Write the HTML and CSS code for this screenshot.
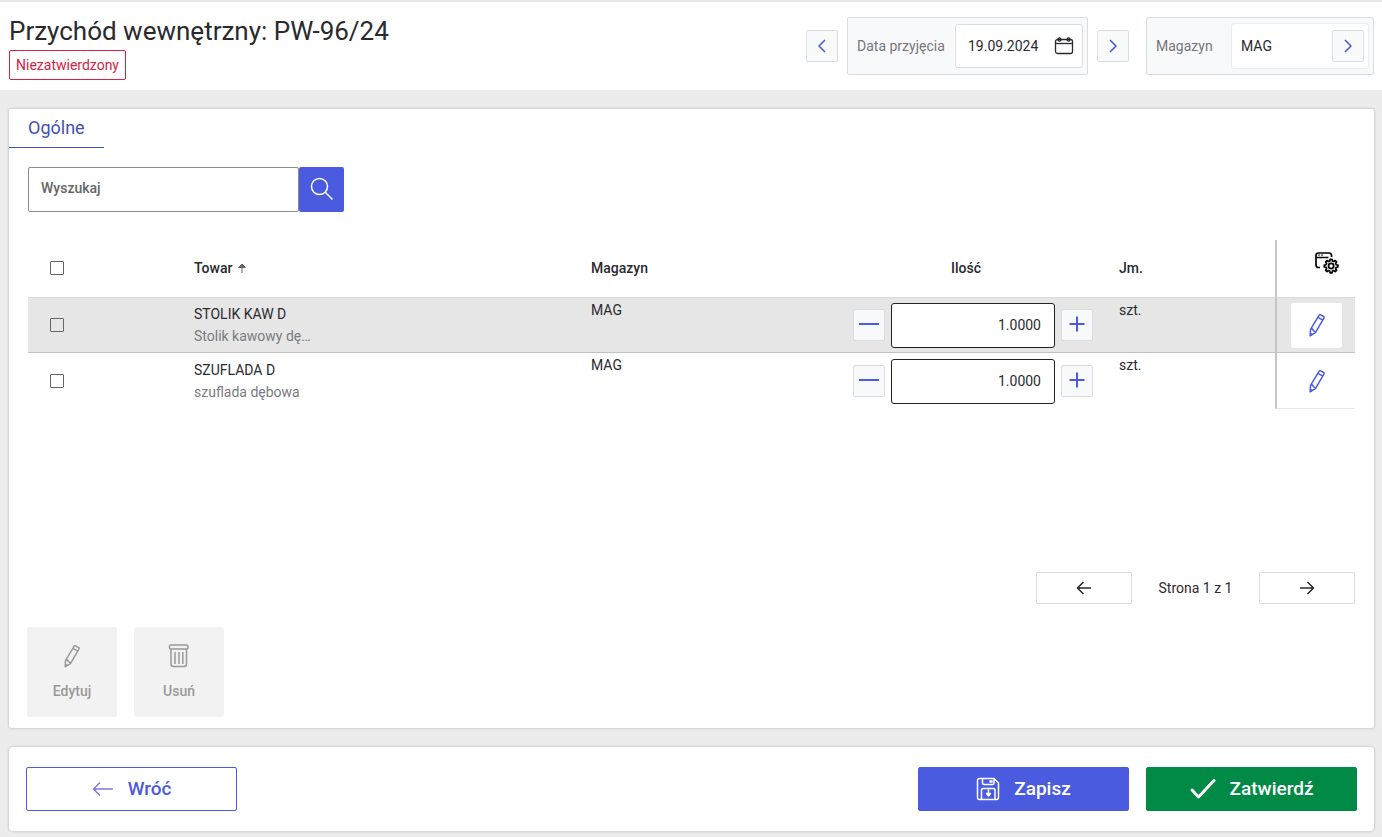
FILE: index.html
```html
<!DOCTYPE html>
<html lang="pl">
<head>
<meta charset="utf-8">
<meta name="viewport" content="width=device-width, initial-scale=1">
<title>Przychód wewnętrzny: PW-96/24</title>
<link rel="stylesheet" href="styles.css">
</head>
<body>
<svg class="sprite" aria-hidden="true">
  <symbol id="chevron-left" viewBox="0 0 16 16"><path d="M11 2 5 8l6 6"/></symbol>
  <symbol id="chevron-right" viewBox="0 0 16 16"><path d="M5 2l6 6-6 6"/></symbol>
  <symbol id="pencil" viewBox="0 0 24 24"><path d="M14.200 2.200q.5-.9 1.400-.4l3 1.700q.9.5.4 1.400L10.600 19.300 5.200 22.800l.3-6.400zM5.500 16.400l1.900-.6 1 1.700 2.200 1.800M13 4.400l4.800 2.800M5.400 20.500l1.800 1"/></symbol>
  <symbol id="arrow-left" viewBox="0 0 16 16"><path d="M15 8H1.500M7.500 2 1.500 8l6 6"/></symbol>
  <symbol id="arrow-right" viewBox="0 0 16 16"><path d="M1 8h13.500M8.500 2l6 6-6 6"/></symbol>
</svg>

<header class="topbar">
  <div class="heading">
    <h1 class="title">Przychód wewnętrzny: PW-96/24</h1>
    <span class="status">Niezatwierdzony</span>
  </div>
  <div class="controls">
    <div class="date-nav">
      <button class="square" type="button" aria-label="Poprzedni dzień"><svg class="icon-16"><use href="#chevron-left"/></svg></button>
      <div class="group">
        <label class="group-label" for="date">Data przyjęcia</label>
        <div class="field field-date">
          <input id="date" class="field-input" type="text" value="19.09.2024">
          <button class="plain" type="button" aria-label="Kalendarz">
            <svg class="icon-calendar" viewBox="0 0 20 18"><rect x="1.500" y="2.500" width="17" height="14" rx="2"/><path d="M1.500 6.500h17"/><circle cx="5.500" cy="2.500" r="1.500"/><circle cx="14.500" cy="2.500" r="1.500"/></svg>
          </button>
        </div>
      </div>
      <button class="square" type="button" aria-label="Następny dzień"><svg class="icon-16"><use href="#chevron-right"/></svg></button>
    </div>
    <div class="group">
      <label class="group-label group-label-store" for="store">Magazyn</label>
      <div class="field field-store">
        <input id="store" class="field-input" type="text" value="MAG">
        <button class="square" type="button" aria-label="Wybierz magazyn"><svg class="icon-16"><use href="#chevron-right"/></svg></button>
      </div>
    </div>
  </div>
</header>

<main class="page">
  <section class="card">
    <nav class="tabs"><a class="tab" href="#general" aria-current="page">Ogólne</a></nav>
    <div class="content" id="general">
      <form class="search" role="search">
        <input class="search-input" type="text" placeholder="Wyszukaj" aria-label="Wyszukaj">
        <button class="search-button" type="button" aria-label="Szukaj"><svg class="icon-search" viewBox="0 0 24 24"><circle cx="9.500" cy="9.500" r="8"/><path d="M15.300 15.300 22.500 22.500"/></svg></button>
      </form>

      <div class="table-area">
        <table class="items">
          <colgroup><col class="col-check"><col class="col-product"><col class="col-store"><col class="col-qty"><col><col class="col-action"></colgroup>
          <thead>
            <tr>
              <th class="cell-check"><input class="check" type="checkbox" aria-label="Zaznacz wszystko"></th>
              <th>Towar <svg class="icon-sort" viewBox="0 0 10 10"><path d="M5 10V1M1.500 4.500 5 1l3.500 3.500z"/></svg></th>
              <th>Magazyn</th>
              <th class="head-qty">Ilość</th>
              <th class="cell-unit">Jm.</th>
              <th class="cell-action head-action">
                <button class="plain" type="button" aria-label="Ustawienia tabeli">
                  <svg class="icon-settings" viewBox="0 0 24 22"><path d="M5 15.500H3.500Q1 15.500 1 13V3.500Q1 1 3.500 1H14q2.500 0 2.500 2.500V5M1 5.500h12.500M3.500 3.200h1M6.500 3.200h1"/><path d="M15.120 7.230L17.080 7.230L17.410 9.010L18.730 9.560L20.220 8.540L21.610 9.930L20.590 11.420L21.140 12.740L22.920 13.070L22.920 15.030L21.140 15.360L20.590 16.680L21.610 18.170L20.220 19.560L18.730 18.540L17.410 19.090L17.080 20.870L15.120 20.870L14.790 19.090L13.470 18.540L11.980 19.560L10.590 18.170L11.610 16.680L11.060 15.360L9.280 15.030L9.280 13.070L11.060 12.740L11.610 11.420L10.590 9.930L11.980 8.540L13.470 9.560L14.790 9.010Z"/><circle cx="16.100" cy="14.050" r="2.600"/></svg>
                </button>
              </th>
            </tr>
          </thead>
          <tbody>
            <tr class="row-active">
              <td class="cell-check"><input class="check" type="checkbox" aria-label="STOLIK KAW D"></td>
              <td class="cell-product"><div class="code">STOLIK KAW D</div><div class="name">Stolik kawowy dę…</div></td>
              <td class="cell-text">MAG</td>
              <td><div class="qty">
                <button class="square" type="button" aria-label="Zmniejsz"><svg class="icon-20" viewBox="0 0 20 20"><path d="M0 9h20"/></svg></button>
                <input class="qty-input" type="text" value="1.0000" aria-label="Ilość STOLIK KAW D">
                <button class="square" type="button" aria-label="Zwiększ"><svg class="icon-20" viewBox="0 0 20 20"><path d="M2.500 9h15M10 1.500v15"/></svg></button>
              </div></td>
              <td class="cell-text cell-unit">szt.</td>
              <td class="cell-action"><button class="edit" type="button" aria-label="Edytuj STOLIK KAW D"><svg class="icon-24"><use href="#pencil"/></svg></button></td>
            </tr>
            <tr>
              <td class="cell-check"><input class="check" type="checkbox" aria-label="SZUFLADA D"></td>
              <td class="cell-product"><div class="code">SZUFLADA D</div><div class="name">szuflada dębowa</div></td>
              <td class="cell-text">MAG</td>
              <td><div class="qty">
                <button class="square" type="button" aria-label="Zmniejsz"><svg class="icon-20" viewBox="0 0 20 20"><path d="M0 9h20"/></svg></button>
                <input class="qty-input" type="text" value="1.0000" aria-label="Ilość SZUFLADA D">
                <button class="square" type="button" aria-label="Zwiększ"><svg class="icon-20" viewBox="0 0 20 20"><path d="M2.500 9h15M10 1.500v15"/></svg></button>
              </div></td>
              <td class="cell-text cell-unit">szt.</td>
              <td class="cell-action"><button class="edit" type="button" aria-label="Edytuj SZUFLADA D"><svg class="icon-24"><use href="#pencil"/></svg></button></td>
            </tr>
          </tbody>
        </table>
      </div>

      <div class="pager">
        <button class="pager-button" type="button" aria-label="Poprzednia strona"><svg class="icon-16"><use href="#arrow-left"/></svg></button>
        <span class="pager-text">Strona 1 z 1</span>
        <button class="pager-button" type="button" aria-label="Następna strona"><svg class="icon-16"><use href="#arrow-right"/></svg></button>
      </div>
    </div>
    <div class="tiles">
      <button class="tile" type="button" disabled><svg class="icon-24"><use href="#pencil"/></svg>Edytuj</button>
      <button class="tile" type="button" disabled><svg class="icon-24" viewBox="0 0 24 24"><rect x="2.500" y="1" width="18.500" height="4" rx="1.500"/><path d="M4 5v15q0 2.500 2.500 2.500H17q2.500 0 2.500-2.500V5M8 8v12M12 8v12M15.800 8v12"/></svg>Usuń</button>
    </div>
  </section>

  <footer class="card actions">
    <button class="action action-back" type="button"><svg class="icon-back" viewBox="0 0 22 16"><path d="M21 8H1.500M8 1.500 1.500 8 8 14.500"/></svg>Wróć</button>
    <div class="actions-main">
      <button class="action action-save" type="button"><svg class="icon-24" viewBox="0 0 24 24"><path d="M3.500 1.500H18l4.500 4.500v14.500q0 2-2 2h-17q-2 0-2-2v-17q0-2 2-2zM6.500 1.500V6q0 1.500 1.500 1.500h8.500Q18 7.500 18 6V1.500M5.500 22.500V13q0-1.500 1.500-1.500h10.500q1.500 0 1.500 1.500v9.500M12.500 12.500v5M10.500 16.500h4l-2 2.500zM14 4h2v1h-2z"/></svg>Zapisz</button>
      <button class="action action-confirm" type="button"><svg class="icon-check" viewBox="0 0 26 22"><path d="M2 12l6.500 7L24 2.500"/></svg>Zatwierdź</button>
    </div>
  </footer>
</main>
</body>
</html>
```

FILE: styles.css
```css
* { box-sizing: border-box; }

body {
  margin: 0;
  min-height: 100vh;
  display: flex;
  flex-direction: column;
  background: #ececec;
  color: #2a2a2e;
  font-family: Roboto, "Liberation Sans", sans-serif;
  font-size: 14px;
  line-height: 20px;
}

button, input { font: inherit; color: inherit; margin: 0; }
button { padding: 0; cursor: pointer; }
button:disabled { cursor: default; }
svg { display: block; fill: none; stroke: currentColor; stroke-width: 2; stroke-linejoin: round; }
.sprite { display: none; }

.icon-16 { width: 16px; height: 16px; stroke-width: 1.6; }
.icon-20 { width: 20px; height: 20px; }
.icon-24 { width: 24px; height: 24px; stroke-width: 1.5; }

/* Top bar */
.topbar {
  display: flex;
  justify-content: space-between;
  align-items: flex-start;
  padding: 15px 8px 10px 9px;
  background: #fff;
  border-top: 2px solid #e8e8e8;
}
.heading { display: flex; flex-direction: column; align-items: flex-start; gap: 5px; }
.title { margin: 0; font-size: 26px; line-height: 28px; font-weight: 400; }
.status {
  padding: 4px 6px;
  border: 1px solid #d8213f;
  border-radius: 2px;
  color: #d8213f;
}
.controls { display: flex; gap: 17px; }
.date-nav { display: flex; align-items: center; gap: 9px; }
.square {
  flex: none;
  width: 32px;
  height: 32px;
  display: flex;
  align-items: center;
  justify-content: center;
  background: #f8f9fb;
  border: 1px solid #dcdde0;
  border-radius: 2px;
  color: #4a5be0;
}
.group {
  display: flex;
  align-items: center;
  height: 58px;
  padding: 0 4px 0 9px;
  background: #f8f9fb;
  border: 1px solid #dcdde0;
  border-radius: 2px;
}
.group-label { width: 98px; color: #75757a; }
.group-label-store { width: 75px; }
.field {
  display: flex;
  align-items: center;
  justify-content: space-between;
  background: #fff;
  border: 1px solid #dcdde0;
  border-radius: 3px;
}
.field-date { width: 128px; height: 44px; padding: 0 8px 0 12px; }
.field-store { width: 138px; height: 46px; padding: 0 4px 0 9px; border-color: #ececef; }
.field-input { width: 80px; padding: 0; border: 0; background: transparent; }
.plain { padding: 0; border: 0; background: transparent; }
.icon-calendar { width: 20px; height: 18px; stroke-width: 1.3; }

/* Cards */
.page { flex: 1; display: flex; flex-direction: column; gap: 19px; padding: 19px 8px 6px 9px; }
.card { background: #fff; border-radius: 2px; box-shadow: 0 0 3px rgba(0, 0, 0, 0.25); }
.page > section { flex: 1; display: flex; flex-direction: column; }
.tabs { display: flex; }
.tab {
  padding: 7px 19px;
  border-bottom: 1px solid #3f51b5;
  color: #3f51b5;
  font-size: 18px;
  line-height: 24px;
  text-decoration: none;
}
.content { flex: 1; display: flex; flex-direction: column; padding: 19px 19px 0; }

.search { display: flex; }
.search-input {
  width: 271px;
  height: 45px;
  padding: 0 12px 3px;
  border: 1px solid #8c8c8c;
  border-radius: 2px;
}
.search-input::placeholder { color: #666; opacity: 1; font-weight: 500; }
.search-button {
  width: 45px;
  height: 45px;
  padding-bottom: 2px;
  display: grid;
  place-items: center;
  border: 0;
  border-radius: 2px;
  background: #4a5be0;
  color: #fff;
}
.icon-search { width: 24px; height: 24px; stroke-width: 1.5; }

/* Items table */
.table-area { flex: 1; padding: 28px 0 32px; }
.items { width: 100%; table-layout: fixed; border-collapse: separate; border-spacing: 0; }
.col-check { width: 166px; }
.col-product { width: 397px; }
.col-store { width: 262px; }
.col-qty { width: 240px; }
.col-action { width: 80px; }
.items th { height: 57px; padding: 0 0 2px; text-align: left; font-weight: 500; }
.items td { height: 56px; padding: 0; }
.items .head-qty { padding-right: 14px; text-align: center; }
.items .cell-unit { padding-left: 26px; }
.items .cell-check { padding-left: 22px; }
.items .cell-product { padding-bottom: 1px; }
.row-active td { background: #e6e6e6; border-top: 1px solid #dadada; border-bottom: 1px solid #c2c2c2; }
.check {
  appearance: none;
  display: block;
  width: 14px;
  height: 14px;
  margin: 0;
  background: #fff;
  border: 1px solid #666;
  border-radius: 1px;
}
.row-active .check { background: transparent; }
.check:checked { background: #4a5be0; }
.icon-sort { display: inline-block; width: 10px; height: 10px; margin-left: 1px; stroke-width: 1; color: #666; fill: #666; }
.code { line-height: 22px; }
.name { color: #7b7b7f; line-height: 22px; white-space: nowrap; }
.items .cell-text { padding-top: 2px; vertical-align: top; }
.qty { display: flex; align-items: center; gap: 6px; }
.qty-input {
  width: 164px;
  height: 45px;
  padding: 0 13px;
  background: #fff;
  border: 1px solid #222;
  border-radius: 3px;
  text-align: right;
}
.items .cell-action { padding-left: 14px; border-left: 2px solid #c6c6c8; }
.items .head-action { padding: 0 0 12px 38px; vertical-align: bottom; }
.items tbody tr:last-child .cell-action { border-bottom: 1px solid #e8e8ee; }
.head-action .plain { display: block; margin-bottom: 11px; }
.icon-settings { width: 24px; height: 22px; stroke-width: 1.7; color: #000; }
.edit {
  width: 51px;
  height: 45px;
  display: grid;
  place-items: center;
  border: 0;
  border-radius: 3px;
  background: #fff;
  color: #4a5be0;
}

/* Pager and row tools */
.pager { display: flex; justify-content: flex-end; align-items: center; }
.pager-button {
  width: 96px;
  height: 32px;
  display: grid;
  place-items: center;
  background: #fff;
  border: 1px solid #dedede;
  border-radius: 2px;
}
.pager-text { width: 127px; text-align: center; }
.tiles { display: flex; gap: 17px; padding: 23px 18px 11px; }
.tile {
  width: 90px;
  height: 90px;
  display: flex;
  flex-direction: column;
  align-items: center;
  justify-content: center;
  gap: 13px;
  border: 0;
  border-radius: 3px;
  background: #f2f2f2;
  color: #999;
  font-weight: 500;
}

/* Bottom actions */
.actions { display: flex; justify-content: space-between; padding: 20px 17px; border-radius: 4px; }
.actions-main { display: flex; gap: 17px; }
.action {
  width: 211px;
  height: 44px;
  display: flex;
  align-items: center;
  justify-content: center;
  gap: 14px;
  border: 1px solid #4a5be0;
  border-radius: 2px;
  font-size: 19px;
  font-weight: 500;
}
.action-back { background: #fff; color: #4a5be0; }
.icon-back { width: 22px; height: 16px; stroke-width: 1.5; color: #8274e0; }
.action-save { background: #4a5be0; color: #fff; }
.action-confirm { background: #008a45; border-color: #008a45; color: #fff; }
.icon-check { width: 26px; height: 22px; stroke-width: 3; stroke-linecap: round; }
```
